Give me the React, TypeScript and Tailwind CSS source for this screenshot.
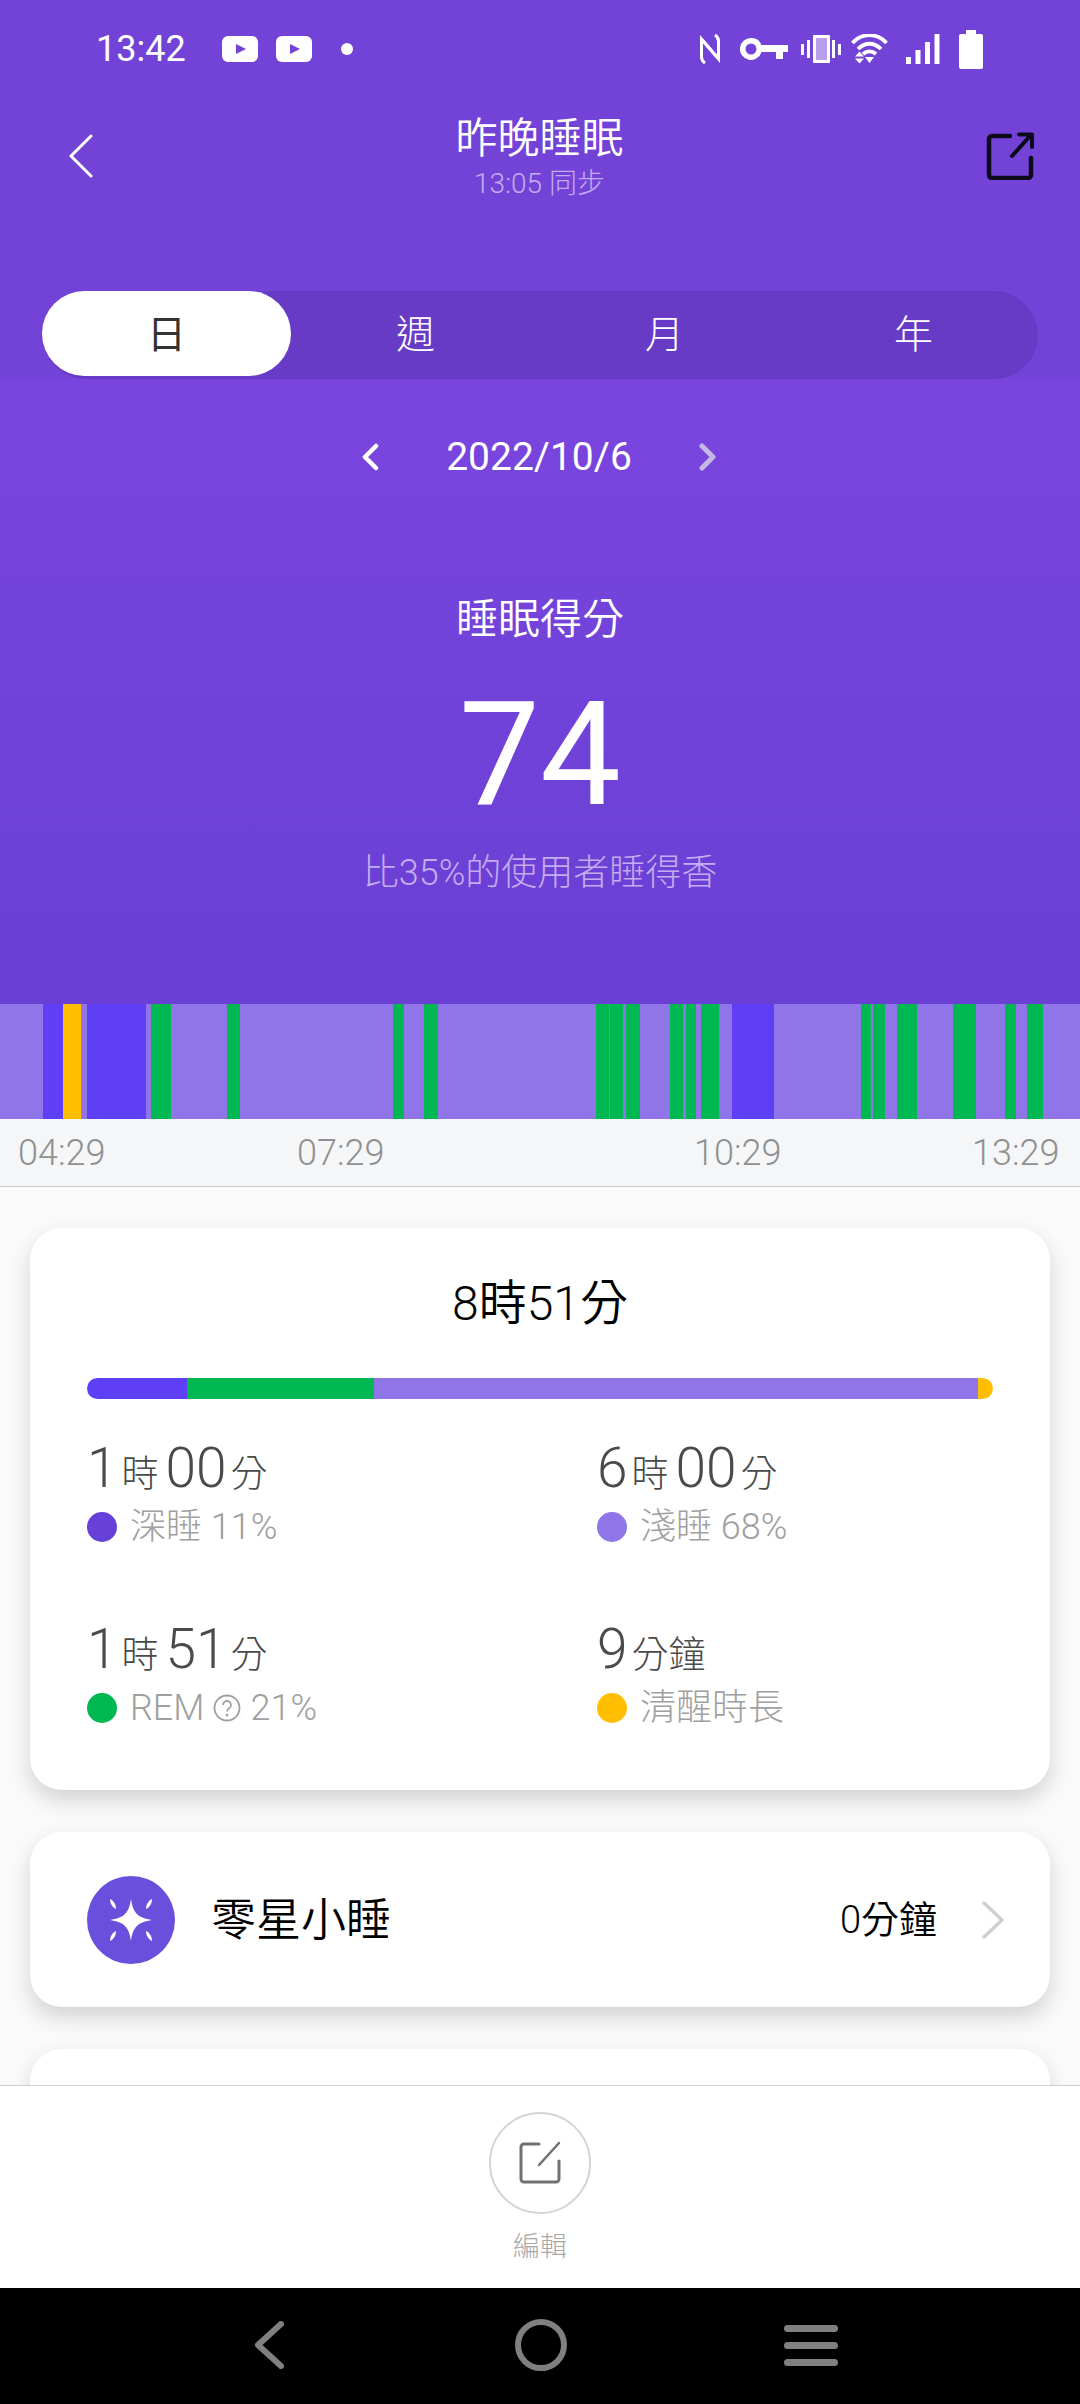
const DEEP = '#5f3ff5'
const LIGHT = '#8f75e8'
const REM = '#00b852'
const AWAKE = '#ffbe00'

const FONT = "font-['Roboto','Noto_Sans_CJK_TC',sans-serif]"

// x position where each sleep stage ends on the night chart
const segments: [number, string][] = [
  [43, LIGHT], [63, DEEP], [81, AWAKE], [87, LIGHT], [146, DEEP], [151, LIGHT], [171, REM],
  [227, LIGHT], [240, REM], [393, LIGHT], [404, REM], [424, LIGHT], [438, REM], [596, LIGHT],
  [609, REM], [610, LIGHT], [623, REM], [626, LIGHT], [640, REM], [670, LIGHT], [683, REM],
  [686, LIGHT], [696, REM], [701, LIGHT], [719, REM], [732, LIGHT], [774, DEEP], [861, LIGHT],
  [871, REM], [873, LIGHT], [885, REM], [897, LIGHT], [917, REM], [953, LIGHT], [976, REM],
  [1005, LIGHT], [1016, REM], [1027, LIGHT], [1043, REM], [1080, LIGHT],
]

function StatusBar() {
  return (
    <div className="flex h-[98px] items-center text-white">
      <span className="ml-[96px] w-[126px] text-[36px] leading-none font-normal">13:42</span>
      <Youtube />
      <span className="ml-[18px]"><Youtube /></span>
      <span className="ml-[29px] h-3 w-3 rounded-full bg-white" />
      <div className="ml-auto mr-[97px] flex items-center">
        <svg width="20" height="32" viewBox="0 0 20 32" fill="none" stroke="white" strokeWidth="3">
          <path d="M5 30 C2 28 1.500 26 1.500 24 V6 L18 25" />
          <path d="M15 2 C18 4 18.500 6 18.500 8 V26 L2 7" />
        </svg>
        <svg className="ml-[20px]" width="48" height="22" viewBox="0 0 48 22" fill="white">
          <path fillRule="evenodd" d="M11 0a11 11 0 0 1 10.500 7H48v7h-5v7h-7v-7H21.500A11 11 0 1 1 11 0zm0 5.500a5.500 5.500 0 1 0 0 11 5.500 5.500 0 0 0 0-11z" />
        </svg>
        <svg className="ml-[13px]" width="40" height="28" viewBox="0 0 40 28" fill="white">
          <rect x="0" y="9" width="3" height="11" />
          <rect x="6" y="5" width="3" height="18" />
          <rect x="31" y="5" width="3" height="18" />
          <rect x="37" y="9" width="3" height="11" />
          <rect x="12" y="0" width="17" height="28" rx="1" />
          <rect x="15" y="3" width="11" height="22" fill="#b79fec" />
        </svg>
        <svg className="ml-[10px]" width="37" height="30" viewBox="0 0 37 30" fill="none" stroke="white" strokeWidth="3.800">
          <path d="M1.500 9 C11 -1.500 26 -1.500 35.500 9" />
          <path d="M7 15 C14 8 23 8 30 15" />
          <path d="M12 20 C16 16.500 21 16.500 25 20" />
          <path d="M4 22.500 l4.500 -5 l4.500 5z M4 24.500 h9 l-4.500 5z M14 23 h9 l-4.500 6z" fill="white" stroke="none" />
        </svg>
        <svg className="ml-[18px]" width="34" height="30" viewBox="0 0 34 30" fill="white">
          <rect x="0" y="23" width="5" height="7" />
          <rect x="9.500" y="16" width="5" height="14" />
          <rect x="19" y="8" width="5" height="22" />
          <rect x="28.500" y="0" width="5" height="30" />
        </svg>
        <svg className="ml-[19px]" width="24" height="39" viewBox="0 0 24 39" fill="white">
          <path d="M7 0h10v4h5a2 2 0 0 1 2 2v31a2 2 0 0 1-2 2H2a2 2 0 0 1-2-2V6a2 2 0 0 1 2-2h5z" />
        </svg>
      </div>
    </div>
  )
}

function Youtube() {
  return (
    <svg className="block" width="36" height="26" viewBox="0 0 36 26">
      <rect width="36" height="26" rx="6" fill="white" />
      <path d="M14 8 L24 13 L14 18z" fill="#7343d8" />
    </svg>
  )
}

function Metric({ parts, dot, label }: { parts: [string, string][]; dot: string; label: React.ReactNode }) {
  return (
    <div>
      <div className="flex h-16 items-baseline text-[#4a4a4a]">
        {parts.map(([num, unit]) => (
          <span key={unit} className="mr-[7px] flex items-baseline gap-[4px]">
            <span className="text-[55px] leading-[64px] font-[350]">{num}</span>
            <span className="text-[37px] leading-[64px] font-light">{unit}</span>
          </span>
        ))}
      </div>
      <div className="mt-[5px] flex h-11 items-center gap-[13px] text-[36px] font-light text-[#a0a0a0]">
        <span className="h-[30px] w-[30px] rounded-full" style={{ backgroundColor: dot }} />
        <span className="flex items-center">{label}</span>
      </div>
    </div>
  )
}

export default function App() {
  return (
    <div className={`flex h-[2404px] w-[1080px] flex-col overflow-hidden bg-[#fafafa] ${FONT}`}>
      <header className="h-[379px] flex-none bg-[#7343d8]">
        <StatusBar />
        <div className="mt-3 flex h-[92px] items-center justify-between pl-[69px] pr-[46px]">
          <svg width="24" height="44" viewBox="0 0 24 44" fill="none" stroke="white" strokeWidth="3" strokeLinecap="round" strokeLinejoin="round">
            <path d="M22 2 L2 22 L22 42" />
          </svg>
          <div className="text-center">
            <h1 className="text-[42px] leading-[56px] font-[350] text-white">昨晚睡眠</h1>
            <p className="text-[28px] leading-[34px] font-light text-[#c3acf0]">13:05 同步</p>
          </div>
          <svg width="48" height="48" viewBox="0 0 48 48" fill="none" stroke="#0d0a1c" strokeWidth="4.500" strokeLinecap="round" strokeLinejoin="round">
            <path d="M24 4 H6 a3 3 0 0 0 -3 3 V43 a3 3 0 0 0 3 3 H42 a3 3 0 0 0 3 -3 V26" />
            <path d="M26 24 L45 3 M33 2.500 H46 V15" strokeWidth="4" />
          </svg>
        </div>
        <div className="mx-[42px] mt-[89px] grid h-[88px] grid-cols-4 rounded-full bg-[#683bc7] text-center text-[39px] leading-[88px] font-light text-white">
          <span className="h-[85px] rounded-full bg-white font-normal text-[#333333]">日</span>
          <span>週</span>
          <span>月</span>
          <span>年</span>
        </div>
      </header>

      <section className="h-[625px] flex-none bg-gradient-to-b from-[#7a45de] to-[#693fd4] text-center text-white">
        <div className="mt-[56px] flex h-11 items-center justify-center gap-[67px] pr-[2px]">
          <svg width="18" height="28" viewBox="0 0 18 28" fill="none" stroke="white" strokeWidth="4.500" strokeLinecap="round" strokeLinejoin="round">
            <path d="M15 3 L4 14 L15 25" />
          </svg>
          <span className="text-[39px] leading-[44px] font-normal">2022/10/6</span>
          <svg width="18" height="28" viewBox="0 0 18 28" fill="none" stroke="#c4b8e4" strokeWidth="5" strokeLinecap="round" strokeLinejoin="round">
            <path d="M3 3 L14 14 L3 25" />
          </svg>
        </div>
        <h2 className="mt-[113px] text-[42px] leading-[56px] font-[350]">睡眠得分</h2>
        <p className="mt-[27px] text-[144px] leading-[160px] font-normal">74</p>
        <p className="mt-[14px] text-[36px] leading-[48px] font-light text-[#c3acf0]">比35%的使用者睡得香</p>
      </section>

      <div className="flex h-[115px] flex-none">
        {segments.map(([end, color], i) => (
          <div
            key={end}
            className="h-full"
            style={{ width: end - (i > 0 ? segments[i - 1][0] : 0), backgroundColor: color }}
          />
        ))}
      </div>

      <div className="flex h-[68px] flex-none items-center border-b border-[#c8c9cb] bg-[#f5f6f8] pl-[18px] text-[36px] font-light text-[#909090]">
        <span className="w-[88px]">04:29</span>
        <span className="ml-[191px] w-[88px]">07:29</span>
        <span className="ml-[309px] w-[88px]">10:29</span>
        <span className="ml-[190px] w-[88px]">13:29</span>
      </div>

      <main className="min-h-0 flex-1 overflow-hidden px-[30px] pt-[41px]">
        <div className="rounded-[32px] bg-white px-[57px] pb-[60px] pt-[46px] shadow-[0_10px_22px_rgba(0,0,0,0.16)]">
          <p className="text-center text-[48px] leading-[60px] font-[350] text-black">8時51分</p>
          <div className="mt-[44px] flex h-[21px] overflow-hidden rounded-full">
            <div className="w-[100px] bg-[#5f3ff5]" />
            <div className="w-[187px] bg-[#00b852]" />
            <div className="w-[604px] bg-[#8f75e8]" />
            <div className="w-[15px] bg-[#ffbe00]" />
          </div>
          <div className="mt-[37px] grid grid-cols-[510px_1fr] gap-y-[68px]">
            <Metric parts={[['1', '時'], ['00', '分']]} dot="#6640d8" label="深睡 11%" />
            <Metric parts={[['6', '時'], ['00', '分']]} dot="#8f75e8" label="淺睡 68%" />
            <Metric
              parts={[['1', '時'], ['51', '分']]}
              dot="#00b852"
              label={
                <>
                  REM
                  <svg className="mx-[8px]" width="28" height="28" viewBox="0 0 28 28" fill="none" stroke="#a0a0a0" strokeWidth="1.800">
                    <circle cx="14" cy="14" r="12.500" />
                    <path d="M10 11 a4 4 0 1 1 6 3.500 c-1.500 1 -2 1.500 -2 3" />
                    <circle cx="14" cy="21" r="0.600" />
                  </svg>
                  <span className="ml-[2px]">21%</span>
                </>
              }
            />
            <Metric parts={[['9', '分鐘']]} dot="#ffbe00" label="清醒時長" />
          </div>
        </div>

        <div className="mt-[42px] flex h-[175px] items-center rounded-[32px] bg-white pl-[57px] pr-[45px] shadow-[0_10px_22px_rgba(0,0,0,0.16)]">
          <svg width="88" height="88" viewBox="0 0 88 88">
            <circle cx="44" cy="44" r="44" fill="#6a4edc" />
            <path d="M44 23 C46 37 51 42 65 44 C51 46 46 51 44 65 C42 51 37 46 23 44 C37 42 42 37 44 23z" fill="white" />
            <path d="M23 23 C27 25 29 29 29 33 C25 31 23 27 23 23z M65 23 C61 25 59 29 59 33 C63 31 65 27 65 23z M23 65 C27 63 29 59 29 55 C25 57 23 61 23 65z M65 65 C61 63 59 59 59 55 C63 57 65 61 65 65z" fill="white" />
          </svg>
          <span className="ml-[36px] pt-[2px] text-[45px] font-[350] text-black">零星小睡</span>
          <span className="ml-auto pt-[2px] text-[38px] font-[350] text-black">0分鐘</span>
          <svg className="ml-[44px]" width="24" height="40" viewBox="0 0 24 40" fill="none" stroke="#cfcfcf" strokeWidth="3.500" strokeLinecap="round" strokeLinejoin="round">
            <path d="M3 3 L21 20 L3 37" />
          </svg>
        </div>

        <div className="mt-[42px] h-[100px] rounded-[32px] bg-white shadow-[0_10px_22px_rgba(0,0,0,0.16)]" />
      </main>

      <footer className="relative h-[203px] flex-none border-t border-[#cfcfcf] bg-white pt-[26px] text-center">
        <div className="mx-auto flex h-[102px] w-[102px] items-center justify-center rounded-full border-2 border-[#d4d4d4]">
          <svg width="44" height="44" viewBox="0 0 44 44" fill="none" stroke="#707070" strokeWidth="3" strokeLinecap="round" strokeLinejoin="round">
            <path d="M21 3 H6 a3 3 0 0 0 -3 3 V38 a3 3 0 0 0 3 3 H38 a3 3 0 0 0 3 -3 V20" />
            <path d="M21 24 L41 2" strokeWidth="2.500" />
          </svg>
        </div>
        <p className="mt-[15px] text-[27px] leading-[36px] font-light text-[#a8a8a8]">編輯</p>
      </footer>

      <nav className="flex h-[116px] flex-none items-center bg-black pb-[2px]">
        <svg className="ml-[254px]" width="30" height="48" viewBox="0 0 30 48" fill="none" stroke="#808080" strokeWidth="6" strokeLinecap="round" strokeLinejoin="round">
          <path d="M27 3 L4 24 L27 45" />
        </svg>
        <span className="ml-[231px] h-[52px] w-[52px] rounded-full border-[6px] border-[#808080]" />
        <div className="ml-[217px] flex w-[54px] flex-col gap-[10px]">
          <span className="h-[7px] rounded-full bg-[#808080]" />
          <span className="h-[7px] rounded-full bg-[#808080]" />
          <span className="h-[7px] rounded-full bg-[#808080]" />
        </div>
      </nav>
    </div>
  )
}
